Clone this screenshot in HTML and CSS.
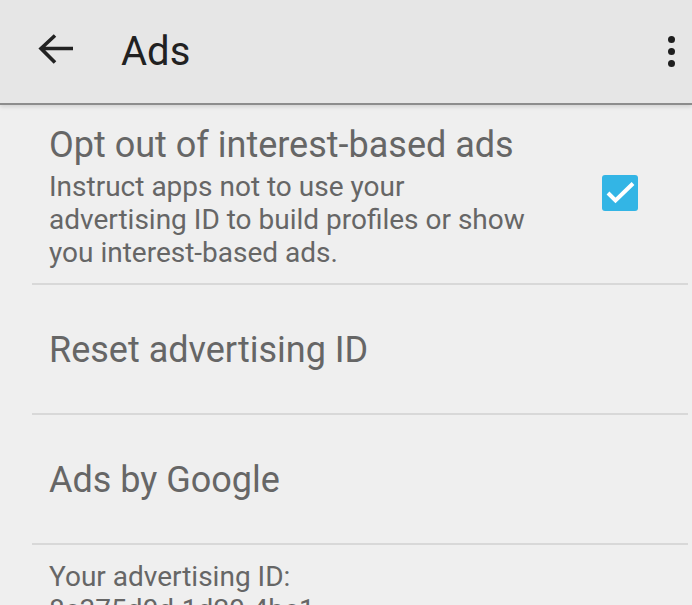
FILE: index.html
```html
<!DOCTYPE html>
<html lang="en">

<head>
  <meta charset="UTF-8">
  <meta name="viewport" content="width=device-width, initial-scale=1.0">
  <title>Ads</title>
  <link rel="stylesheet" href="styles.css">
</head>

<body>
  <header class="toolbar">
    <button class="toolbar__back" aria-label="Back">
      <svg width="36" height="34" viewBox="0 0 36 34">
        <path d="M4 14.5h32M18 1.5L4 14.5l14 14" fill="none" stroke="#222" stroke-width="3.6" />
      </svg>
    </button>
    <h1 class="toolbar__title">Ads</h1>
    <button class="toolbar__menu" aria-label="More options">
      <span></span><span></span><span></span>
    </button>
  </header>

  <ul class="prefs">
    <li class="pref pref--check">
      <div class="pref__text">
        <div class="pref__title">Opt out of interest-based ads</div>
        <div class="pref__summary">Instruct apps not to use your advertising ID to build profiles or show you interest-based ads.</div>
      </div>
      <span class="checkbox" role="checkbox" aria-checked="true">
        <svg width="36" height="36" viewBox="0 0 36 36">
          <path d="M6 18l7.5 7.5L31 8.5" fill="none" stroke="#fff" stroke-width="4" />
        </svg>
      </span>
    </li>
    <li class="pref">
      <div class="pref__title">Reset advertising ID</div>
    </li>
    <li class="pref">
      <div class="pref__title">Ads by Google</div>
    </li>
    <li class="pref pref--info">
      <div class="pref__summary">Your advertising ID: 8e375d0d-1d20-4be1-a6b3-05d0c4f1e9a2</div>
    </li>
  </ul>
</body>

</html>
```

FILE: styles.css
```css
html,
body {
  height: 100%;
}

body {
  margin: 0;
  background: #efefef;
  font-family: Roboto, "Noto Sans", sans-serif;
  overflow: hidden;
}

button {
  border: 0;
  background: none;
  padding: 0;
  cursor: pointer;
}

.toolbar {
  display: flex;
  align-items: center;
  height: 105px;
  background: #e6e6e6;
  border-bottom: 2px solid #8c8c8c;
  box-shadow: 0 2px 4px rgba(0, 0, 0, 0.12);
  box-sizing: border-box;
}

.toolbar__back {
  display: flex;
  margin: 0 0 2px 37px;
}

.toolbar__title {
  flex: 1;
  margin: 0 0 0 48px;
  font-size: 40px;
  font-weight: 400;
  color: #212121;
}

.toolbar__menu {
  display: flex;
  flex-direction: column;
  gap: 4.5px;
  margin-right: 17px;
}

.toolbar__menu span {
  display: block;
  width: 7.5px;
  height: 7.5px;
  border-radius: 50%;
  background: #1e1e1e;
}

.prefs {
  list-style: none;
  margin: 0 4px 0 32px;
  padding: 0;
}

.pref {
  display: flex;
  align-items: center;
  min-height: 130px;
  padding: 1px 0 0 17px;
  box-sizing: border-box;
  border-bottom: 2px solid #d8d8d8;
  color: #666;
}

.pref--check {
  align-items: flex-start;
  min-height: 0;
  height: 180px;
  padding-top: 19px;
}

.pref--check .pref__summary {
  margin-top: 4px;
}

.pref--info {
  border-bottom: 0;
  padding-top: 15px;
  align-items: flex-start;
}

.pref--info .pref__summary {
  max-width: 320px;
}

.pref__text {
  flex: 1;
}

.pref__title {
  font-size: 36px;
  line-height: 42px;
}

.pref__summary {
  font-size: 28px;
  line-height: 33px;
  max-width: 490px;
}

.checkbox {
  display: block;
  width: 36px;
  height: 36px;
  margin: 51px 50px 0 0;
  border-radius: 3px;
  background: #33b5e5;
}

.checkbox svg {
  display: block;
}
```
